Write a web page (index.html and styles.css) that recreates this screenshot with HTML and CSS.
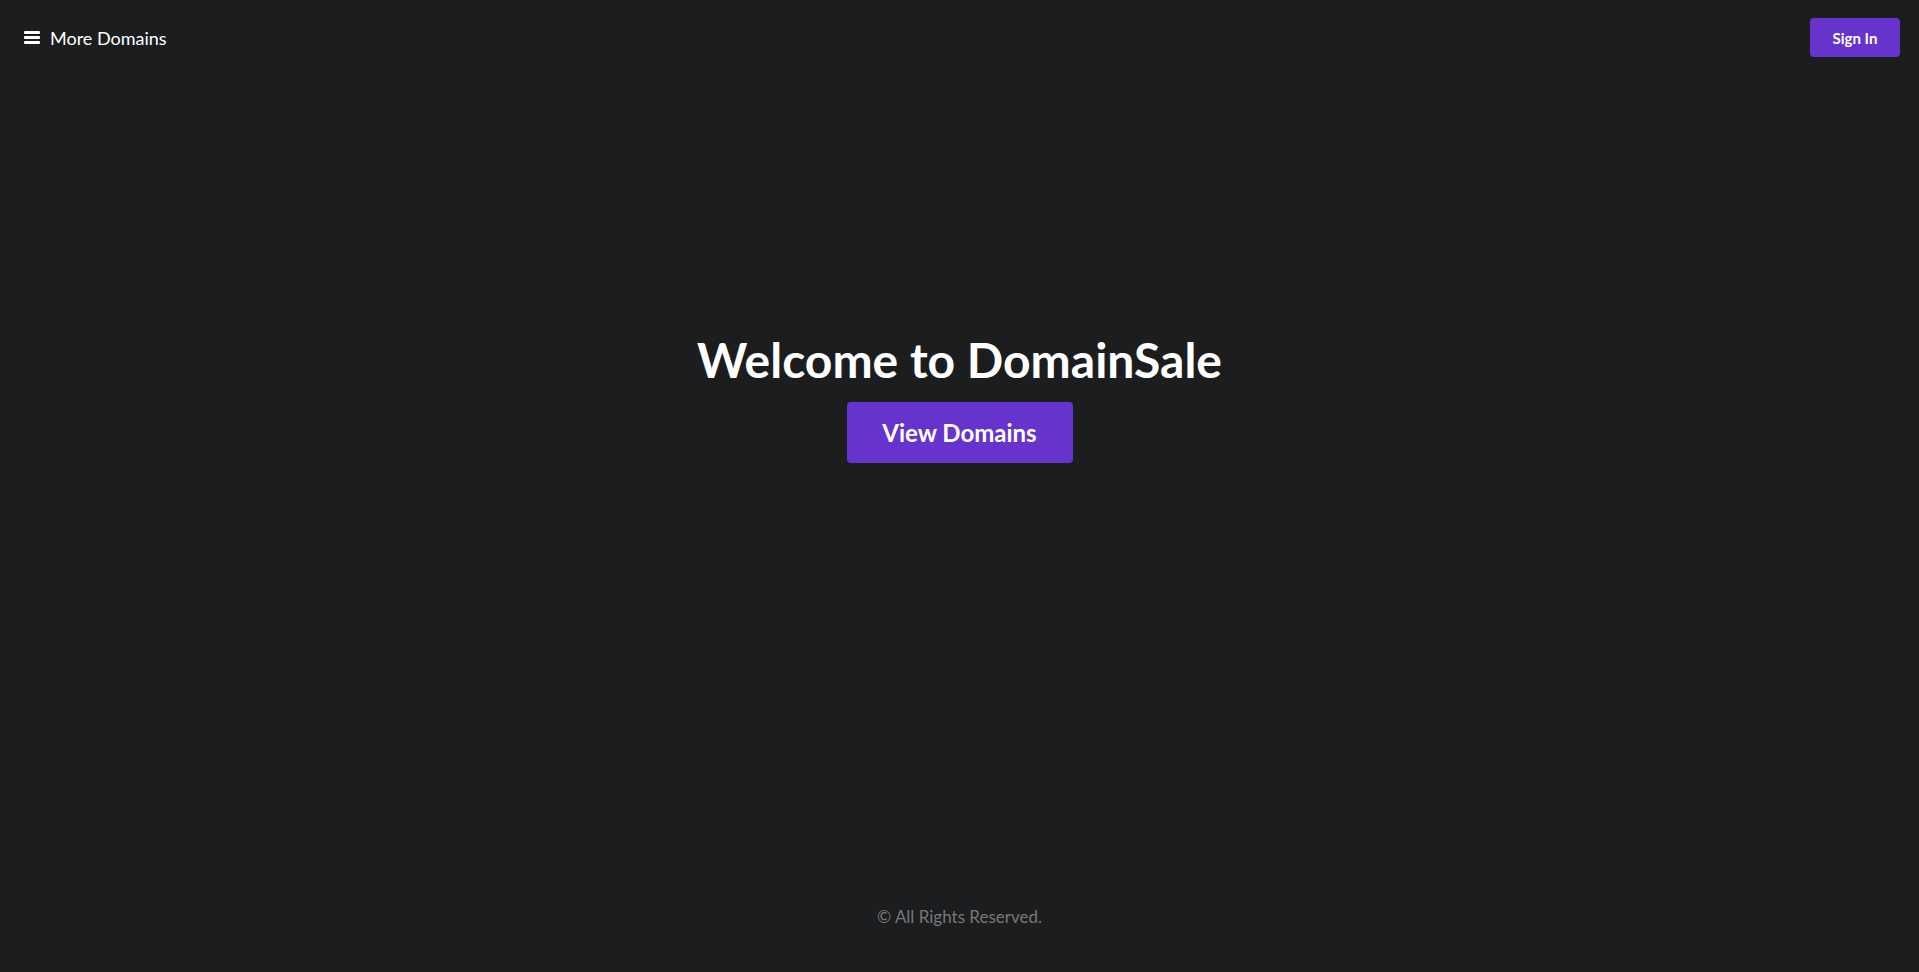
FILE: index.html
```html
<!DOCTYPE html>
<html lang="en">
<head>
    <meta charset="UTF-8">
    <meta name="viewport" content="width=device-width, initial-scale=1.0">
    <title>DomainSale</title>
    <link rel="stylesheet" href="styles.css">
</head>
<body>

<header class="topbar">
    <a class="menu-link" href="#">
        <svg class="menu-icon" width="16" height="13" viewBox="0 0 16 13">
            <rect x="0" y="0" width="16" height="3" rx="1" fill="#fff"/>
            <rect x="0" y="5" width="16" height="3" rx="1" fill="#fff"/>
            <rect x="0" y="10" width="16" height="3" rx="1" fill="#fff"/>
        </svg>
        More Domains
    </a>
    <button class="signin-btn">Sign In</button>
</header>

<main class="hero">
    <h1>Welcome to DomainSale</h1>
    <a class="view-btn" href="#">View Domains</a>
</main>

<footer class="footer">
    &copy; All Rights Reserved.
</footer>

</body>
</html>
```

FILE: styles.css
```css
body {
    font-family: Lato, "Open Sans", sans-serif;
    background-color: #1c1d1f;
    color: #fff;
    margin: 0;
    padding: 0;
    height: 100vh;
    display: flex;
    flex-direction: column;
}

.topbar {
    display: flex;
    justify-content: space-between;
    align-items: center;
    padding: 18px 19px 0 24px;
}

.menu-link {
    display: flex;
    align-items: center;
    gap: 10px;
    color: #fff;
    text-decoration: none;
    font-size: 18px;
}

.signin-btn {
    width: 90px;
    height: 39px;
    background-color: #6633cc;
    color: #fff;
    border: none;
    border-radius: 4px;
    font-family: Lato, sans-serif;
    font-weight: bold;
    font-size: 15px;
    cursor: pointer;
}

.hero {
    flex: 1;
    display: flex;
    flex-direction: column;
    align-items: center;
    justify-content: center;
    padding-bottom: 170px;
}

.hero h1 {
    font-size: 48px;
    font-weight: bold;
    margin: 0 0 14px;
}

.view-btn {
    display: flex;
    align-items: center;
    justify-content: center;
    width: 226px;
    height: 61px;
    background-color: #6633cc;
    color: #fff;
    text-decoration: none;
    border-radius: 4px;
    font-weight: bold;
    font-size: 24px;
}

.footer {
    text-align: center;
    color: #777;
    font-size: 17px;
    padding-bottom: 45px;
}
```
